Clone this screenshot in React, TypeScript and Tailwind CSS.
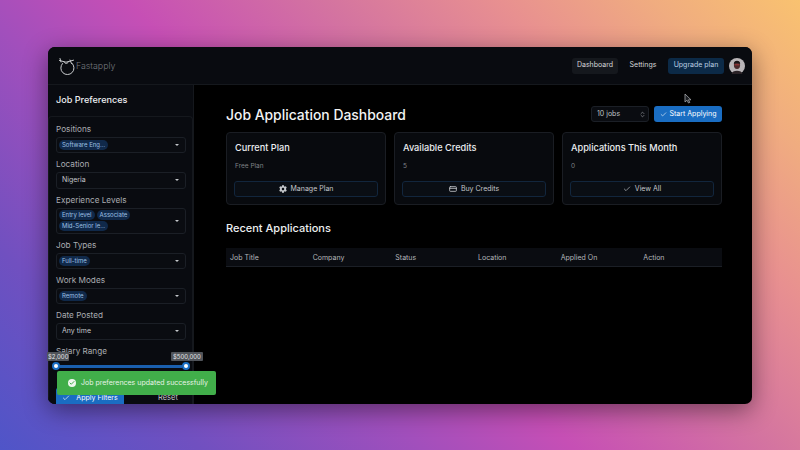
import { Check, ChevronsUpDown, CreditCard } from "lucide-react";
import { FaCog } from "react-icons/fa";

const columns = ["Job Title", "Company", "Status", "Location", "Applied On", "Action"];

const filters = [
  { label: "Positions", chips: ["Software Eng..."] },
  { label: "Location", text: "Nigeria" },
  { label: "Experience Levels", chips: ["Entry level", "Associate", "Mid-Senior le..."] },
  { label: "Job Types", chips: ["Full-time"] },
  { label: "Work Modes", chips: ["Remote"] },
  { label: "Date Posted", text: "Any time" },
];

const cards = [
  { title: "Current Plan", value: "Free Plan", action: "Manage Plan", icon: <FaCog size={8} /> },
  { title: "Available Credits", value: "5", action: "Buy Credits", icon: <CreditCard size={8} strokeWidth={2.5} /> },
  { title: "Applications This Month", value: "0", action: "View All", icon: <Check size={8} /> },
];

function Logo() {
  return (
    <svg width="18" height="18" viewBox="0 0 18 18" fill="none" stroke="#c9cbce" strokeWidth="1" strokeLinecap="round">
      <path d="M4.5 6.5 A6.6 6.6 0 1 0 14 6.2" />
      <path d="M1.5 3.5 L8 5.2 L15.5 3.2" />
      <path d="M2 1.5 L3 5 M6 5 C7 7 9 7 10.5 5" />
      <path d="M12 3 L13.5 6.5" />
    </svg>
  );
}

function Avatar() {
  return (
    <svg width="16" height="16" viewBox="0 0 16 16" className="shrink-0">
      <circle cx="8" cy="8" r="8" fill="#b9b5b8" />
      <path d="M2.5 16 C3 11.5 13 11.5 13.5 16 Z" fill="#2a2226" />
      <ellipse cx="8" cy="7" rx="3.1" ry="4" fill="#4a2a2c" />
      <path d="M4.8 6 C4.8 1.8 11.2 1.8 11.2 6 C9.5 4.6 6.5 4.6 4.8 6 Z" fill="#1a1416" />
      <path d="M5.6 6.8 H10.4" stroke="#b03a3a" strokeWidth="0.9" />
    </svg>
  );
}

function Cursor() {
  return (
    <svg width="8" height="11" viewBox="0 0 8 11" className="absolute left-[684px] top-[93px]" fill="#1c1e22" stroke="#a4a7ab" strokeWidth="0.8">
      <path d="M1 1 L1 9 L3 7.2 L4.5 10 L5.8 9.4 L4.4 6.8 L7 6.8 Z" />
    </svg>
  );
}

function FilterField({ label, chips, text }: { label: string; chips?: string[]; text?: string }) {
  return (
    <div className="flex flex-col gap-[1px]">
      <span className="text-[8.2px] leading-[13px] text-[#a9acb1]">{label}</span>
      <div className="flex min-h-[16px] w-[130px] items-center justify-between rounded-[3px] border border-[#1b1f26] bg-[#0a0c11] py-[1.5px] pl-[2px] pr-[6px]">
        {chips ? (
          <div className="flex flex-wrap gap-x-[2px] gap-y-[1px]">
            {chips.map((chip) => (
              <span key={chip} className="rounded-full bg-[#10294a] px-[3px] text-[6px] leading-[10px] text-[#9fc0e4]">
                {chip}
              </span>
            ))}
          </div>
        ) : (
          <span className="pl-[3px] text-[7px] leading-[12px] text-[#c4c7cb]">{text}</span>
        )}
        <span className="h-0 w-0 shrink-0 border-x-[2px] border-t-[2px] border-x-transparent border-t-[#c4c7cb]" />
      </div>
    </div>
  );
}

export default function App() {
  return (
    <div className="relative h-[450px] w-[800px] overflow-hidden bg-[linear-gradient(45deg,#4f55c8_0%,#7050c0_16%,#a24fbc_34%,#c64fb5_46%,#d474a0_62%,#e89090_76%,#f0ac80_88%,#f9c270_100%)] pl-[48px] pt-[47px] [font-family:Inter,sans-serif]">
      <div className="flex h-[357px] w-[704px] flex-col overflow-hidden rounded-[7px] bg-black shadow-[0_6px_24px_rgba(0,0,0,0.45)]">
        {/* Header */}
        <header className="flex h-[38px] shrink-0 items-center justify-between border-b border-[#15181d] bg-[#090b10] pl-[10px] pr-[7px]">
          <div className="flex items-center">
            <Logo />
            <span className="text-[8.8px] font-light text-[#74777c]">Fastapply</span>
          </div>
          <nav className="flex items-center text-[7px] text-[#d5d7da]">
            <span className="flex h-[16px] w-[46px] items-center justify-center rounded-[3px] bg-[#15181d]">Dashboard</span>
            <span className="flex h-[16px] w-[50px] items-center justify-center">Settings</span>
            <span className="flex h-[16px] w-[56px] items-center justify-center rounded-[3px] bg-[#0c2a47] text-[#bcd0e4]">Upgrade plan</span>
            <span className="ml-[5px]">
              <Avatar />
            </span>
          </nav>
        </header>

        <div className="flex min-h-0 flex-1">
          {/* Sidebar */}
          <aside className="flex w-[146px] shrink-0 flex-col border-r border-[#15181d] bg-[#090b10]">
            <h2 className="pl-[8px] pt-[9px] text-[9.1px] font-medium leading-[12px] text-[#eceef0]">Job Preferences</h2>
            <div className="mt-[10px] flex flex-1 flex-col gap-[5.1px] rounded-t-[4px] border border-b-0 border-[#15181d] pl-[7px] pt-[5.5px]">
              {filters.map((filter) => (
                <FilterField key={filter.label} {...filter} />
              ))}
              <span className="text-[8.2px] leading-[13px] text-[#a9acb1]">Salary Range</span>
              <div className="-ml-[4px] -mt-[1px] flex w-[138px] items-center">
                <span className="h-[8px] w-[8px] shrink-0 rounded-full border-2 border-[#1a6fc4] bg-white" />
                <span className="h-[3px] flex-1 bg-[#1a5fae]" />
                <span className="h-[8px] w-[8px] shrink-0 rounded-full border-2 border-[#1a6fc4] bg-white" />
              </div>
              <div className="mt-[13px] flex items-start">
                <button className="flex h-[16px] w-[68px] shrink-0 items-start justify-center gap-[6px] rounded-t-[2px] bg-[#1a6dc2] pt-[5px] text-[7px] leading-[10px] text-white">
                  <Check size={8} className="mt-[1px]" />
                  Apply Filters
                </button>
                <span className="ml-[34px] shrink-0 pt-[5px] text-[7.5px] leading-[10px] text-[#c4c7cb]">Reset</span>
              </div>
            </div>
          </aside>

          {/* Main */}
          <main className="flex-1 pl-[32px] pr-[30px] pt-[21px]">
            <div className="flex items-start justify-between">
              <h1 className="-mt-[1px] text-[13.9px] font-medium leading-[20px] text-[#f2f3f4]">Job Application Dashboard</h1>
              <div className="flex items-center gap-[5px]">
                <div className="flex h-[16px] w-[58px] items-center justify-between rounded-[3px] border border-[#1b1f26] bg-[#0a0c11] pl-[5px] pr-[2px] text-[7px] text-[#bfc2c6]">
                  10 jobs
                  <ChevronsUpDown size={7} className="text-[#a9acb1]" />
                </div>
                <button className="flex h-[16px] w-[68px] items-center justify-center gap-[3px] rounded-[3px] bg-[#1a6dc2] text-[7px] text-white">
                  <Check size={7} />
                  Start Applying
                </button>
              </div>
            </div>

            <div className="mt-[7px] grid grid-cols-3 gap-[8px]">
              {cards.map((card) => (
                <div key={card.title} className="flex h-[73px] flex-col rounded-[4px] border border-[#1a1d23] bg-[#080a0e] px-[8px] pt-[8px]">
                  <h3 className="text-[9.2px] font-medium leading-[13px] text-[#eceef0]">{card.title}</h3>
                  <p className="mt-[7px] text-[6.5px] leading-[10px] text-[#7f8287]">{card.value}</p>
                  <button className="-mx-[1px] mt-[10px] flex h-[16px] items-center justify-center gap-[4px] rounded-[3px] border border-[#12263d] bg-[#0a0e14] text-[7px] text-[#c4c7cb]">
                    {card.icon}
                    {card.action}
                  </button>
                </div>
              ))}
            </div>

            <h2 className="mt-[15px] text-[11px] font-medium leading-[16px] text-[#eceef0]">Recent Applications</h2>
            <div className="mt-[12px] grid h-[19px] grid-cols-6 items-center border-b border-[#1b1f26] bg-[#0a0c11] pt-[3px] text-[7px] text-[#b4b7bb]">
              {columns.map((column) => (
                <span key={column} className="pl-[4px]">
                  {column}
                </span>
              ))}
            </div>
          </main>
        </div>
      </div>

      {/* Slider value tooltips */}
      <span className="absolute left-[47px] top-[352px] h-[9px] rounded-[1px] bg-[#50545a] px-[1px] text-[6px] leading-[9px] text-[#e4e5e7]">$2,000</span>
      <span className="absolute left-[171px] top-[352px] h-[9px] rounded-[1px] bg-[#50545a] px-[2px] text-[6px] leading-[9px] text-[#e4e5e7]">$500,000</span>

      {/* Toast */}
      <div className="absolute left-[57px] top-[371px] flex h-[24px] w-[159px] items-center gap-[5px] rounded-[2px] bg-[#41ae4a] pl-[11px] text-[7px] text-[#e6f3e6]">
        <span className="flex h-[8px] w-[8px] items-center justify-center rounded-full bg-[#eef7ee]">
          <Check size={6} strokeWidth={4} className="text-[#41ae4a]" />
        </span>
        Job preferences updated successfully
      </div>

      <Cursor />
    </div>
  );
}
